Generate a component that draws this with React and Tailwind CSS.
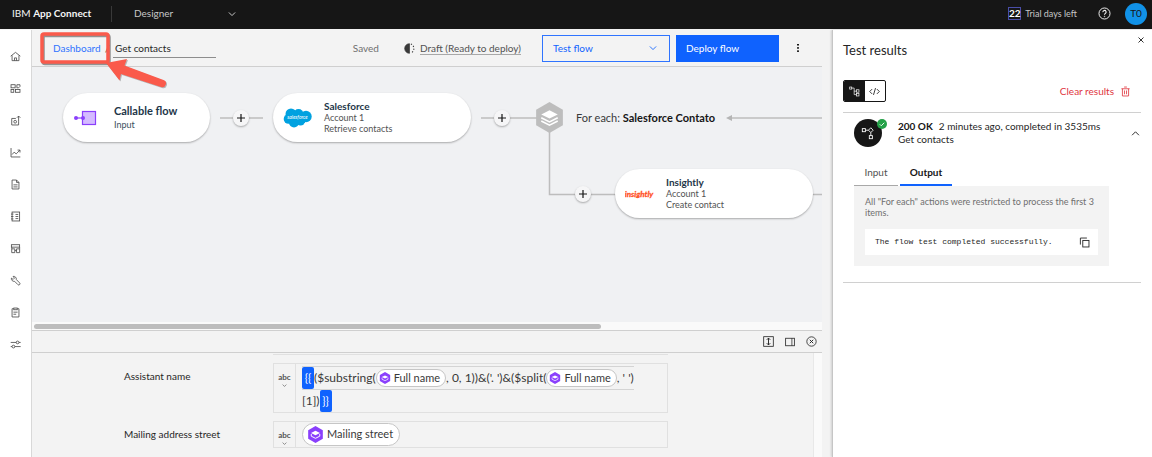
import React from "react";

function Icon({ size = 10, vb = 16, sw = 1, className = "", children }) {
  return (
    <svg
      width={size}
      height={size}
      viewBox={`0 0 ${vb} ${vb}`}
      fill="none"
      stroke="currentColor"
      strokeWidth={sw}
      className={`shrink-0 ${className}`}
      aria-hidden="true"
    >
      {children}
    </svg>
  );
}

const NAV = [
  {
    label: "Home",
    art: (
      <>
        <path d="M1 7.500 8 2l7 5.500M3 6.500V14h10V6.500" />
        <path d="M6.500 14v-4h3v4" />
      </>
    ),
  },
  {
    label: "Catalog",
    art: (
      <>
        <rect x="1.500" y="2.500" width="6" height="4.500" />
        <rect x="1.500" y="9.500" width="4" height="4" />
        <rect x="8" y="9.500" width="6.500" height="4" />
        <path d="M10 2.500h4.500V5L12.500 7H10z" />
      </>
    ),
  },
  {
    label: "Export",
    art: (
      <>
        <path d="M8.500 5H2.500v9.500h10V9" />
        <circle cx="7.500" cy="9.800" r="2" />
        <path d="M12.500 9V1.500M10 4l2.500-2.500L15 4" />
      </>
    ),
  },
  {
    label: "Insights",
    art: (
      <>
        <path d="M1.500 1.500v13h13.500" />
        <path d="M3 11l3-3.500 3 2.500 5.500-5.500M11 4.500h3.500V8" />
      </>
    ),
  },
  {
    label: "Documents",
    art: (
      <>
        <path d="M3 1.500h6.500L13 5v9.500H3zM9.500 1.500V5H13" />
        <path d="M5 8.500h6M5 11.500h6" />
      </>
    ),
  },
  {
    label: "Notebook",
    art: (
      <>
        <rect x="3" y="1.500" width="11" height="13" />
        <path d="M8 5h4M8 8h4M8 11h4M1.500 4.500H5M1.500 8H5M1.500 11.500H5" />
      </>
    ),
  },
  {
    label: "Templates",
    art: (
      <>
        <rect x="2" y="2.500" width="12" height="3.500" />
        <path d="M2.500 8.500h4.500v5.500H2.500zM9.500 8.500H14V14H9.500zM7 11h2.500M2.500 6v2.500M14 6v2.500" />
      </>
    ),
  },
  {
    label: "Tools",
    art: (
      <path d="M2 4.500l2.500 2 2-2L4.500 2A4 4 0 0 1 9.200 6.600L14 11.500a1.700 1.700 0 0 1-2.500 2.500L6.700 9.200A4 4 0 0 1 2 4.500z" />
    ),
  },
  {
    label: "Clipboard",
    art: (
      <>
        <path d="M5.500 2.500H3v12h10v-12h-2.500" />
        <rect x="5.500" y="1.500" width="5" height="2.500" />
        <path d="M5 7.500h6M5 10.500h4" />
      </>
    ),
  },
  {
    label: "Settings",
    art: (
      <>
        <circle cx="11" cy="5" r="2" />
        <circle cx="5" cy="11" r="2" />
        <path d="M1 5h8M13 5h2.500M1 11h2M7 11h8.500" />
      </>
    ),
  },
];

function Header() {
  return (
    <header className="flex h-[29px] shrink-0 items-center bg-[#161616] pb-[2px] text-[10px] text-[#c6c6c6]">
      <span className="w-[111px] pl-3 whitespace-nowrap text-[#f4f4f4]">
        IBM <b className="font-bold">App Connect</b>
      </span>
      <div className="flex h-4 items-center border-l border-[#393939] pl-[22px]">
        <div className="grid w-[103px] items-center">
          <select
            aria-label="Product area"
            className="col-start-1 row-start-1 w-full appearance-none bg-transparent outline-none"
          >
            <option>Designer</option>
          </select>
          <Icon size={10} className="pointer-events-none col-start-1 row-start-1 justify-self-end">
            <path d="M3 5.500l5 5 5-5" strokeWidth="1.600" />
          </Icon>
        </div>
      </div>
      <div className="ml-auto flex items-center gap-1 pr-[5px]">
        <span className="flex h-[13px] w-[13px] items-center justify-center border border-[#4a4ea8] text-[10px] font-bold text-white">
          22
        </span>
        <span className="text-[9px]">Trial days left</span>
        <button aria-label="Help" className="ml-[17px] text-[#f4f4f4]">
          <Icon size={13}>
            <circle cx="8" cy="8" r="6.800" strokeWidth="1.200" />
            <path d="M6 6.300a2 2 0 1 1 3 1.600q-1 .5-1 1.700" strokeWidth="1.300" />
            <circle cx="8" cy="11.600" r=".5" fill="currentColor" strokeWidth=".6" />
          </Icon>
        </button>
        <button
          aria-label="Account"
          className="ml-[10px] h-[22px] w-[22px] rounded-full bg-[#1192e8] text-[10px] text-[#161616]"
        >
          T0
        </button>
      </div>
    </header>
  );
}

function SideNav() {
  return (
    <nav className="flex w-8 shrink-0 flex-col items-center border-r border-[#d8d8d8] bg-white pt-[10px] text-[#4a4a4a]">
      {NAV.map((n) => (
        <a key={n.label} href="#" aria-label={n.label} className="flex h-8 items-center">
          <Icon size={11} sw={1.2}>
            {n.art}
          </Icon>
        </a>
      ))}
    </nav>
  );
}

function Callout() {
  return (
    <svg
      className="pointer-events-none absolute top-0 left-[6px] z-10 overflow-visible"
      width="130"
      height="60"
      viewBox="0 0 130 60"
      aria-hidden="true"
    >
      <g transform="translate(1 1.500)" opacity=".4" fill="none">
        <rect x="4" y="4" width="66" height="28" rx="2" stroke="#000" strokeWidth="3.500" />
      </g>
      <rect x="4" y="4" width="66" height="28" rx="2" fill="none" stroke="#fa5a4b" strokeWidth="3.500" />
      <g transform="translate(1 1)" opacity=".25">
        <path d="M68 33l21-4-2.500 6.500 39 14.500a3 3 0 0 1-2.500 7L83 44l-1.500 6.500z" fill="#000" />
      </g>
      <path d="M68 33l21-4-2.500 6.500 39 14.500a3 3 0 0 1-2.500 7L83 44l-1.500 6.500z" fill="#fa5a4b" />
    </svg>
  );
}

function FlowToolbar() {
  return (
    <div className="relative flex h-[37px] shrink-0 items-center border-b border-[#cfcfcf] bg-[#f3f3f3] text-[10px]">
      <Callout />
      <a href="#" className="w-[68px] pl-[21px] text-[#2f74ff]">
        Dashboard
      </a>
      <span className="w-[13px] pl-[5px] text-[#161616]">/</span>
      <input
        aria-label="Flow name"
        defaultValue="Get contacts"
        className="h-5 w-[103px] border-b border-[#8d8d8d] bg-transparent px-[2px] text-[#262626] outline-none"
      />
      <span className="ml-auto pr-[25px] text-[#6f6f6f]">Saved</span>
      <Icon size={11} className="mr-[5px] text-[#393939]">
        <path d="M8 1a7 7 0 0 0 0 14z" fill="currentColor" />
        <path d="M10 1.500A7 7 0 0 1 10 14.500" strokeWidth="1.500" strokeDasharray="1.800 2.400" />
      </Icon>
      <a href="#" className="border-b border-[#a8a8a8] leading-3 text-[#525252]">
        Draft (Ready to deploy)
      </a>
      <button className="ml-[21px] flex h-[27px] w-32 items-center justify-between border border-[#2f74ff] px-[10px] text-[#0f62fe]">
        Test flow
        <Icon size={10} className="mr-[1px]">
          <path d="M3 5.500l5 5 5-5" strokeWidth="1.400" />
        </Icon>
      </button>
      <button className="ml-[6px] h-[27px] w-[103px] bg-[#0f62fe] px-[10px] text-left text-white">
        Deploy flow
      </button>
      <button aria-label="More actions" className="mr-[19px] ml-[14px]">
        <svg width="10" height="10" viewBox="0 0 10 10" fill="#161616" aria-hidden="true">
          <rect x="4" y="1" width="2" height="1.500" />
          <rect x="4" y="4.200" width="2" height="1.500" />
          <rect x="4" y="7.400" width="2" height="1.500" />
        </svg>
      </button>
    </div>
  );
}

function Layers({ size, color }) {
  return (
    <svg width={size} height={size} viewBox="0 0 32 32" className="shrink-0" aria-hidden="true">
      <path d="M16 0l13.800 8v16L16 32 2.200 24V8z" fill={color} />
      <path d="M16 8.500l8.500 4.300-8.500 4.300-8.500-4.300z" fill="#fff" />
      <path
        d="M7.500 16.300l8.500 4.300 8.500-4.300M7.500 19.600l8.500 4.300 8.500-4.300"
        fill="none"
        stroke="#fff"
        strokeWidth="1.600"
      />
    </svg>
  );
}

function TokenMark({ size }) {
  return (
    <svg width={size} height={size} viewBox="0 0 32 32" className="shrink-0" aria-hidden="true">
      <path d="M16 0l13.800 8v16L16 32 2.200 24V8z" fill="#8a3ffc" />
      <path d="M16 9l8.500 4-8.500 4.200L7.500 13z" fill="#fff" />
      <path d="M8 15v4.200l8 4 8-4V15" fill="none" stroke="#fff" strokeWidth="1.800" />
    </svg>
  );
}

function Plus({ className }) {
  return (
    <button
      aria-label="Add node"
      className={`absolute flex h-4 w-4 items-center justify-center rounded-full bg-[#f6f6f7] text-[#161616] shadow-[0_1px_2px_rgba(0,0,0,0.3)] ${className}`}
    >
      <svg width="10" height="10" viewBox="0 0 10 10" aria-hidden="true">
        <path d="M5 1v8M1 5h8" stroke="currentColor" strokeWidth="1.200" />
      </svg>
    </button>
  );
}

const NODE =
  "absolute flex h-[49px] items-center rounded-full bg-white shadow-[0_1px_2px_rgba(0,0,0,0.3)]";

function AppNode({ className, logo, title, action }) {
  return (
    <div className={`${NODE} w-[198px] pl-[10px] ${className}`}>
      {logo}
      <div className="pl-3 text-[9px] leading-[11px] text-[#525252]">
        <div className="text-[10px] font-bold text-[#1d3649]">{title}</div>
        <div>Account 1</div>
        <div>{action}</div>
      </div>
    </div>
  );
}

function Canvas() {
  return (
    <div className="relative min-h-0 flex-1 overflow-hidden bg-[#f0f1f3]">
      <svg className="absolute top-0 left-0" width="100%" height="160" aria-hidden="true">
        <g stroke="#bdbdbd" strokeWidth="1.500" fill="none">
          <path d="M188 51h43M449 51h68M517.500 51v76.500h800M700 51h700" />
        </g>
        <path d="M694 51l6-3v6z" fill="#b5b5b5" />
      </svg>
      <div className={`${NODE} top-[26px] left-[31px] w-[147px] pl-[10px]`}>
        <svg width="25" height="18" viewBox="0 0 25 18" aria-hidden="true">
          <rect x="9.500" y="2.500" width="13" height="13" fill="#d4bbff" stroke="#8a3ffc" strokeWidth="1.200" />
          <path d="M3 9h7" stroke="#8a3ffc" strokeWidth="1.200" />
          <circle cx="3" cy="9" r="2" fill="#8a3ffc" />
          <circle cx="10" cy="9" r="2" fill="#8a3ffc" />
        </svg>
        <div className="pl-4 text-[9px] leading-[14px] text-[#3d4f60]">
          <div className="text-[11px] font-bold text-[#1d3649]">Callable flow</div>
          <div>Input</div>
        </div>
      </div>
      <Plus className="top-[43px] left-[201px]" />
      <AppNode
        className="top-[26px] left-[241px]"
        title="Salesforce"
        action="Retrieve contacts"
        logo={
          <svg width="29" height="20" viewBox="0 0 29 20" aria-hidden="true">
            <g fill="#00a1e0">
              <circle cx="8" cy="6" r="5.500" />
              <circle cx="15.500" cy="6" r="5" />
              <circle cx="23" cy="8.500" r="5.700" />
              <circle cx="5.500" cy="11" r="4.800" />
              <circle cx="11" cy="14.500" r="5" />
              <circle cx="17.500" cy="13" r="4.500" />
              <rect x="6" y="5" width="16" height="10" />
            </g>
            <text
              x="14.500"
              y="11.300"
              textAnchor="middle"
              fontSize="5"
              fontStyle="italic"
              fontWeight="400"
              fontFamily="Lato, sans-serif"
              fill="#fff"
            >
              salesforce
            </text>
          </svg>
        }
      />
      <Plus className="top-[43px] left-[462px]" />
      <div className="absolute top-[35px] left-[502px]">
        <Layers size={31} color="#bdbdbd" />
      </div>
      <div className="absolute top-[43px] left-[544px] text-[11px] leading-4 whitespace-nowrap text-[#393939]">
        For each: <b className="font-bold text-[#161616]">Salesforce Contato</b>
      </div>
      <Plus className="top-[119px] left-[543px]" />
      <AppNode
        className="top-[102px] left-[583px]"
        title="Insightly"
        action="Create contact"
        logo={
          <svg width="29" height="16" viewBox="0 0 29 16" aria-hidden="true">
            <text
              x="14"
              y="10.500"
              textAnchor="middle"
              fontSize="8"
              fontStyle="italic"
              fontWeight="700"
              fontFamily="Liberation Sans Narrow, Lato, sans-serif"
              fill="#ff4f1f"
              stroke="#ff4f1f"
              strokeWidth=".3"
            >
              insightly
            </text>
          </svg>
        }
      />
    </div>
  );
}

function Pill({ children, big }) {
  return big ? (
    <span className="inline-flex h-[23px] items-center gap-[3px] rounded-full border border-[#c6c6c6] bg-white pr-[6px] pl-1 text-[11px] leading-none">
      <TokenMark size={17} />
      <span className="pb-[2px]">{children}</span>
    </span>
  ) : (
    <span className="inline-flex h-[18px] items-center gap-[3px] rounded-full border border-[#c6c6c6] bg-white pr-[5px] pl-[2px] text-[11px] leading-none">
      <TokenMark size={12} />
      <span className="pb-[2px]">{children}</span>
    </span>
  );
}

function Field({ label, value }) {
  return (
    <div className="flex items-start">
      <span className="w-[149px] pt-[5px] text-[10px] leading-4 text-[#262626]">{label}</span>
      <div className="flex w-[395px] items-stretch border border-[#e0e0e0]">
        <button
          aria-label={`${label} type`}
          className="flex w-[22px] shrink-0 flex-col items-center border-r border-[#e0e0e0] pt-2 text-[8px] leading-[11px] font-bold text-[#525252]"
        >
          abc
          <Icon size={5}>
            <path d="M2 5l6 6 6-6" strokeWidth="2" />
          </Icon>
        </button>
        <div role="textbox" aria-label={label} className="min-w-0 flex-1 pl-[6px] text-[12px] text-[#393939]">
          {value}
        </div>
      </div>
    </div>
  );
}

function Brace({ children }) {
  return (
    <span className="flex h-[22px] w-3 items-center justify-center rounded-[2px] bg-[#0f62fe] text-[11px] text-white">
      {children}
    </span>
  );
}

function MappingPanel() {
  return (
    <section className="flex h-[127px] shrink-0 flex-col border-t border-[#cfcfcf] bg-[#f3f3f3]">
      <div className="flex h-[22px] shrink-0 items-center justify-end gap-[11px] border-b border-[#cfcfcf] pr-[5px] text-[#262626]">
        <button aria-label="Resize panel">
          <Icon size={11}>
            <rect x="1" y="1" width="14" height="14" strokeWidth="1.200" />
            <path d="M8 3v10M5.500 5.500L8 3l2.500 2.500M5.500 10.500L8 13l2.500-2.500" strokeWidth="1.400" />
          </Icon>
        </button>
        <button aria-label="Dock panel to the side">
          <Icon size={10}>
            <rect x="1" y="2" width="14" height="12" strokeWidth="1.300" />
            <path d="M11 2v12" strokeWidth="1.200" />
          </Icon>
        </button>
        <button aria-label="Close panel">
          <Icon size={11}>
            <circle cx="8" cy="8" r="6.800" strokeWidth="1.200" />
            <path d="M5.500 5.500l5 5M10.500 5.500l-5 5" strokeWidth="1.400" />
          </Icon>
        </button>
      </div>
      <div className="flex min-h-0 flex-1">
        <div className="flex flex-1 flex-col gap-2 overflow-hidden pl-[92px]">
          <div className="ml-[149px] h-[2px] w-[395px] shrink-0 border-b border-[#e0e0e0]" />
          <Field
            label="Assistant name"
            value={
              <div className="pt-[2px]">
                <div className="flex w-fit items-center border-y border-[#d4d4d4] leading-5 whitespace-pre">
                  <Brace>{"{{"}</Brace>
                  {"($substring("}
                  <Pill>Full name</Pill>
                  {", 0, 1))&('. ')&($split("}
                  <Pill>Full name</Pill>
                  {", ' ')"}
                </div>
                <div className="flex w-fit items-center">
                  {"[1])"}
                  <Brace>{"}}"}</Brace>
                </div>
              </div>
            }
          />
          <Field
            label="Mailing address street"
            value={
              <div className="flex py-[1px]">
                <Pill big>Mailing street</Pill>
              </div>
            }
          />
        </div>
        <div className="w-[9px] border-l border-[#e8e8e8] bg-[#fafafa]" />
      </div>
    </section>
  );
}

function TestResults() {
  return (
    <aside className="w-80 shrink-0 border-l border-[#c6c6c6] bg-white pr-[11px] pl-[10px] text-[10px] text-[#262626] shadow-[-1px_0_2px_rgba(0,0,0,0.15)]">
      <div className="flex items-start justify-between pt-[5px]">
        <h2 className="pt-[5px] text-[13px] leading-5">Test results</h2>
        <button aria-label="Close test results" className="-mr-[5px] text-[#161616]">
          <Icon size={10}>
            <path d="M4 4l8 8M12 4l-8 8" strokeWidth="1.400" />
          </Icon>
        </button>
      </div>
      <div className="mt-5 flex items-center justify-between pb-[10px]">
        <div className="flex h-[22px] w-[43px] overflow-hidden rounded-[2px] border border-[#161616]">
          <button aria-label="Tree view" className="flex flex-1 items-center justify-center bg-[#161616] text-white">
            <Icon size={11}>
              <rect x="1" y="1.500" width="3" height="3" />
              <path d="M4 3h3.500v9.500H11M7.500 7.500H11" />
              <rect x="11" y="5.500" width="3.500" height="3.500" />
              <rect x="11" y="11" width="3.500" height="3.500" />
            </Icon>
          </button>
          <button aria-label="Code view" className="flex flex-1 items-center justify-center">
            <Icon size={11}>
              <path d="M4.500 4.500L1 8l3.500 3.500M11.500 4.500L15 8l-3.500 3.500M9.500 3l-3 10" strokeWidth="1.300" />
            </Icon>
          </button>
        </div>
        <button className="mr-[10px] flex items-center gap-[6px] text-[#e0353e]">
          Clear results
          <Icon size={11}>
            <path d="M2 4h12M3.500 4v10.500h9V4M6 1.500h4M6.500 6.500v5.500M9.500 6.500v5.500" strokeWidth="1.200" />
          </Icon>
        </button>
      </div>
      <div className="border-y border-[#d0d0d0] pt-[6px] pb-4 pl-[11px]">
        <div className="flex items-center">
          <span className="relative flex h-7 w-7 items-center justify-center rounded-full bg-[#161616] text-white">
            <Icon size={14}>
              <rect x="1.500" y="3" width="3.500" height="3.500" />
              <rect x="9.500" y="11" width="3.500" height="3.500" />
              <path d="M5 4.800h3.500M11.200 7.500V11M11.200 2l2.700 2.800-2.700 2.700L8.500 4.800z" />
            </Icon>
            <span className="absolute top-0 -right-[5px] flex h-[10px] w-[10px] items-center justify-center rounded-full bg-[#24a148]">
              <Icon size={8}>
                <path d="M3.500 8.500l3 3 6-6" strokeWidth="1.800" />
              </Icon>
            </span>
          </span>
          <div className="pl-4 leading-[13px]">
            <div>
              <b className="mr-[6px] font-bold text-[#161616]">200 OK</b>2 minutes ago, completed in 3535ms
            </div>
            <div>Get contacts</div>
          </div>
          <button aria-label="Collapse result" className="ml-auto">
            <Icon size={11}>
              <path d="M3 10.500l5-5 5 5" strokeWidth="1.400" />
            </Icon>
          </button>
        </div>
        <div role="tablist" className="mt-[13px] flex gap-[2px]">
          <button
            role="tab"
            aria-selected="false"
            className="h-[26px] w-11 border-b border-[#a8a8a8] text-[#525252]"
          >
            Input
          </button>
          <button
            role="tab"
            aria-selected="true"
            className="h-[26px] w-[52px] border-b-2 border-[#0f62fe] font-bold text-[#161616]"
          >
            Output
          </button>
        </div>
        <div role="tabpanel" className="mr-8 bg-[#f3f3f3] p-[11px] pt-[10px]">
          <p className="text-[9px] leading-[11px] text-[#6f6f6f]">
            All "For each" actions were restricted to process the first 3 items.
          </p>
          <div className="mt-[11px] flex h-[26px] items-center justify-between bg-white pr-2 pl-[10px]">
            <code className="font-['Liberation_Mono',monospace] text-[8px]">The flow test completed successfully.</code>
            <button aria-label="Copy result">
              <Icon size={11}>
                <rect x="5.500" y="5" width="9" height="9.500" strokeWidth="1.300" />
                <path d="M2 11V1.500h9.500" strokeWidth="1.300" />
              </Icon>
            </button>
          </div>
        </div>
      </div>
    </aside>
  );
}

export default function App() {
  return (
    <div className="flex h-screen flex-col overflow-hidden bg-[#f3f3f3] font-[Lato,sans-serif]">
      <Header />
      <div className="flex min-h-0 flex-1 pt-[1px]">
        <SideNav />
        <main className="mr-[10px] flex min-w-0 flex-1 flex-col">
          <FlowToolbar />
          <Canvas />
          <div className="flex h-2 shrink-0 items-center bg-[#fafafa] pl-[2px]">
            <div className="h-[5px] w-[72%] rounded-full bg-[#bdbdbd]" />
          </div>
          <MappingPanel />
        </main>
        <TestResults />
      </div>
    </div>
  );
}
